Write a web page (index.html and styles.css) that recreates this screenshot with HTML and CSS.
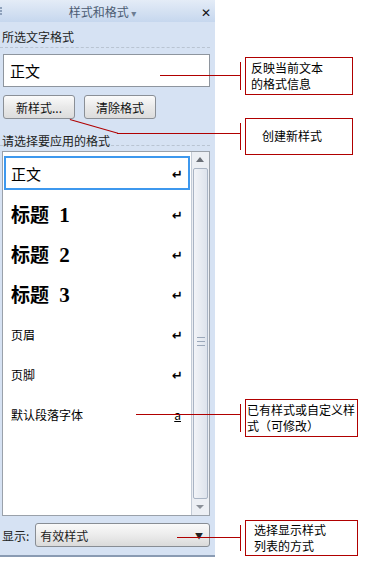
FILE: index.html
```html
<!DOCTYPE html>
<html lang="zh-CN">
<head>
  <meta charset="UTF-8" />
  <title>样式和格式</title>
  <link rel="stylesheet" href="styles.css">
</head>
<body>

  <div class="pane">
    <div class="titlebar">
      <span class="grip"></span>
      <span class="title">样式和格式 <span class="caret">▾</span></span>
      <span class="close">✕</span>
    </div>

    <div class="label">所选文字格式</div>
    <div class="current">正文</div>

    <div class="buttons">
      <button class="btn btn-new">新样式...</button>
      <button class="btn btn-clear">清除格式</button>
    </div>

    <div class="label label-pick">请选择要应用的格式</div>

    <div class="listbox">
      <ul class="styles">
        <li class="item selected"><span>正文</span><i class="ret">↵</i></li>
        <li class="item heading"><span>标题 <b>1</b></span><i class="ret">↵</i></li>
        <li class="item heading"><span>标题 <b>2</b></span><i class="ret">↵</i></li>
        <li class="item heading"><span>标题 <b>3</b></span><i class="ret">↵</i></li>
        <li class="item small"><span>页眉</span><i class="ret">↵</i></li>
        <li class="item small"><span>页脚</span><i class="ret">↵</i></li>
        <li class="item small"><span>默认段落字体</span><i class="char">a</i></li>
      </ul>
      <div class="scrollbar">
        <div class="arrow up"></div>
        <div class="thumb"><span class="grip-lines"></span></div>
        <div class="arrow down"></div>
      </div>
    </div>

    <div class="show">
      <span>显示:</span>
      <div class="select">有效样式<span class="drop">▼</span></div>
    </div>
  </div>

  <!-- callouts -->
  <div class="leader l1"></div>
  <div class="leader l2a"></div>
  <div class="leader l2"></div>
  <div class="leader l3"></div>
  <div class="leader l4"></div>

  <div class="note n1"><span class="bar"></span><p>反映当前文本<br>的格式信息</p></div>
  <div class="note n2"><span class="bar"></span><p>创建新样式</p></div>
  <div class="note n3"><span class="bar"></span><p>已有样式或自定义样<br>式（可修改）</p></div>
  <div class="note n4"><span class="bar"></span><p>选择显示样式<br>列表的方式</p></div>

</body>
</html>
```

FILE: styles.css
```css
body {
  margin: 0;
  background: #fff;
  font-family: "Noto Sans CJK SC", "DejaVu Sans", sans-serif;
  font-size: 12px;
  color: #000;
  width: 365px;
  height: 566px;
  position: relative;
  overflow: hidden;
}

.pane {
  width: 215px;
  height: 557px;
  background: #d6e2f3;
  border-bottom: 2px solid #8a9bb3;
  box-sizing: border-box;
}

.titlebar {
  height: 22px;
  background: linear-gradient(to bottom, #e4ecf7, #c6d7ee);
  display: flex;
  align-items: center;
}

.grip {
  width: 2px;
  height: 8px;
  border-left: 2px dotted #8ea1bb;
}

.title {
  flex: 1;
  text-align: center;
  color: #4b5b72;
  font-size: 12px;
  padding-left: 0;
}

.caret {
  color: #6d7d93;
  font-size: 10px;
}

.close {
  width: 14px;
  font-size: 12px;
  font-weight: bold;
  color: #111;
}

.label {
  height: 26px;
  padding-top: 5px;
  line-height: 20px;
  padding-left: 2px;
  color: #222;
  border-bottom: 1px dashed #b9c4d2;
  margin-right: 5px;
  box-sizing: border-box;
}

.current {
  margin: 6px 5px 0 3px;
  height: 33px;
  background: #fff;
  border: 1px solid #8e959e;
  box-sizing: border-box;
  font-size: 15px;
  line-height: 31px;
  padding-left: 6px;
}

.buttons {
  display: flex;
  gap: 9px;
  padding: 8px 0 0 3px;
  height: 24px;
}

.btn {
  font-family: inherit;
  font-size: 12px;
  width: 72px;
  height: 24px;
  padding: 0;
  border: 1px solid #8a8f96;
  border-radius: 3px;
  background: linear-gradient(to bottom, #fbfbfb, #e9e9e9 50%, #dcdcdc);
  color: #111;
}

.label-pick {
  height: 27px;
  padding-top: 14px;
  line-height: 16px;
}

.listbox {
  margin: 5px 5px 0 2px;
  height: 365px;
  border: 1px solid #9aa1aa;
  background: #fff;
  display: flex;
  box-sizing: border-box;
}

.styles {
  list-style: none;
  margin: 0;
  padding: 4px 1px 0 1px;
  flex: 1;
}

.item {
  height: 40px;
  display: flex;
  align-items: center;
  justify-content: space-between;
  padding: 0 7px 0 7px;
  box-sizing: border-box;
}

.item .ret {
  font-style: normal;
  font-size: 13px;
  font-weight: bold;
}

.item .char {
  font-style: normal;
  font-size: 12px;
  text-decoration: underline;
  margin-right: 2px;
}

.selected {
  height: 34px;
  margin-bottom: 4px;
  border: 2px solid #3d98ee;
  padding-left: 5px;
  padding-right: 5px;
  font-size: 15px;
}

.heading {
  font-size: 19px;
  font-weight: bold;
}

.heading b {
  font-family: "Liberation Serif", serif;
  font-size: 21px;
  margin-left: 6px;
}

.small {
  font-size: 12px;
}

.scrollbar {
  width: 17px;
  border-left: 1px solid #c3cbd6;
  background: #eceff4;
  display: flex;
  flex-direction: column;
}

.arrow {
  height: 16px;
  position: relative;
}

.arrow::after {
  content: "";
  position: absolute;
  left: 4px;
  border-left: 4px solid transparent;
  border-right: 4px solid transparent;
}

.up::after {
  top: 5px;
  border-bottom: 5px solid #6a6f77;
}

.down::after {
  top: 6px;
  border-top: 4px solid #8a9098;
}

.thumb {
  flex: 1;
  margin: 0 1px;
  border: 1px solid #a9b4c4;
  border-radius: 2px;
  background: linear-gradient(to right, #f2f4f8, #dde3ec);
  display: flex;
  align-items: center;
  justify-content: center;
}

.grip-lines {
  width: 8px;
  height: 7px;
  border-top: 1px solid #9aa7b9;
  border-bottom: 1px solid #9aa7b9;
  background: linear-gradient(#9aa7b9, #9aa7b9) center / 100% 1px no-repeat;
  margin-top: 16px;
}

.show {
  display: flex;
  align-items: center;
  gap: 6px;
  padding: 7px 5px 0 2px;
  color: #222;
}

.select {
  flex: 1;
  height: 24px;
  border: 1px solid #888d94;
  border-radius: 3px;
  box-sizing: border-box;
  background: linear-gradient(to bottom, #fafafa, #ececec 50%, #dadada);
  display: flex;
  align-items: center;
  justify-content: space-between;
  padding: 0 6px 0 4px;
  font-size: 12px;
}

.drop {
  font-size: 8px;
}

/* annotation leaders, laid over the pane */
.leader {
  position: absolute;
  height: 1px;
  background: #b00000;
}

.l1 { left: 160px; top: 75px; width: 80px; }
.l2a { left: 70px; top: 119px; width: 50px; transform-origin: 0 0; transform: rotate(16deg); }
.l2 { left: 117px; top: 133px; width: 123px; }
.l3 { left: 136px; top: 414px; width: 104px; }
.l4 { left: 177px; top: 537px; width: 63px; }

.note {
  position: absolute;
  left: 240px;
  display: flex;
  align-items: center;
}

.note .bar {
  width: 1px;
  align-self: stretch;
  background: #b00000;
  margin: 5px 4px 5px 0;
}

.note p {
  margin: 0;
  border: 1px solid #b00000;
  background: #fff;
  line-height: 16px;
  font-size: 12px;
  box-sizing: border-box;
  white-space: nowrap;
}

.n1 { top: 57px; }
.n1 p { width: 108px; height: 38px; padding: 2px 5px; }

.n2 { top: 118px; }
.n2 p { width: 108px; height: 37px; padding: 9px 0 0 16px; }

.n3 { top: 399px; }
.n3 p { width: 113px; height: 38px; padding: 2px 1px; }

.n4 { top: 520px; }
.n4 p { width: 113px; height: 36px; padding: 1px 8px; }
```
